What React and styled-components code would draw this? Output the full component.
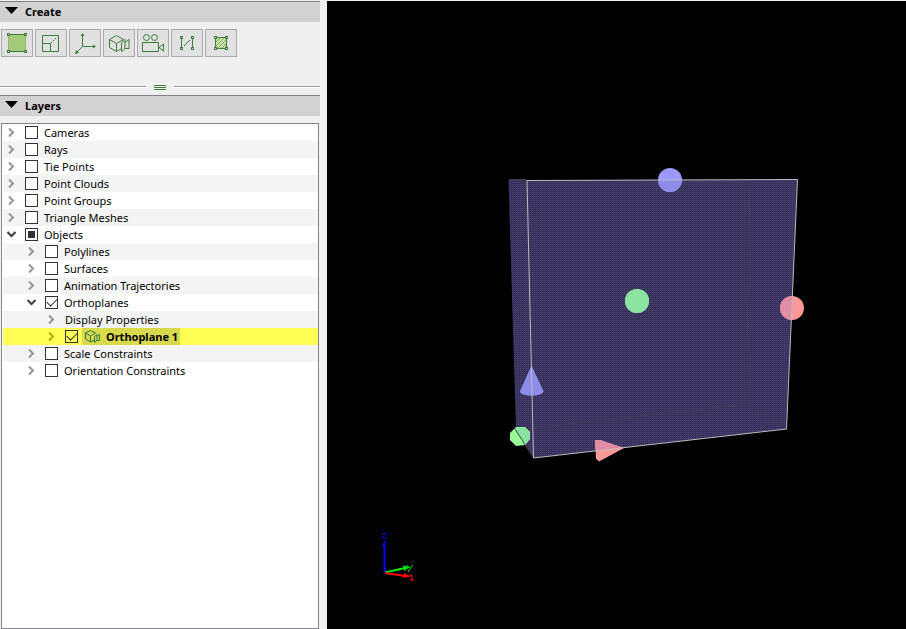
import React, { useState } from "react";
import styled, { createGlobalStyle, css } from "styled-components";

const GlobalStyle = createGlobalStyle`
  * { box-sizing: border-box; }
  html, body { margin: 0; height: 100%; }
  #root { height: 100%; }
  body {
    background: #f0f0f0;
    color: #000;
    font: 12px/17px "Noto Sans", "Open Sans", sans-serif;
  }
`;

const Window = styled.div`
  display: flex;
  gap: 7px;
  height: 100vh;
  padding-top: 1px;
  overflow: hidden;
`;

const Sidebar = styled.aside`
  display: flex;
  flex-direction: column;
  flex: 0 0 320px;
  min-height: 0;
`;

const PanelHeader = styled.button`
  display: flex;
  align-items: center;
  gap: 7px;
  flex: none;
  width: 100%;
  height: 21px;
  padding: 0 5px;
  border: 0;
  border-top: 1px solid #808080;
  background: #d2d2d2;
  color: #000;
  font: 700 11px/20px "Noto Sans", "Open Sans", sans-serif;
  text-align: left;
`;

const Triangle = styled.svg`
  width: 13px;
  height: 7px;
  margin-bottom: 4px;
`;

const Toolbar = styled.div`
  display: flex;
  flex: none;
  gap: 2px;
  padding: 7px 1px 28px;
`;

const ToolButton = styled.button`
  width: 32px;
  height: 28px;
  padding: 0;
  border: 1px solid #a7a9ac;
  background: #e1e1e1;
  color: #3c7d39;
  &:hover { background: #e9f2e5; }
`;

const ToolIcon = styled.svg`
  display: block;
  width: 30px;
  height: 26px;
  fill: none;
  stroke: currentColor;
`;

const Splitter = styled.div`
  display: flex;
  align-items: center;
  flex: none;
  gap: 8px;
  height: 5px;
  margin-bottom: 5px;
  cursor: row-resize;
`;

const Rule = styled.span`
  flex: 1;
  height: 3px;
  border-top: 1px solid #a0a0a0;
  background: linear-gradient(#fff, #fff) top / 100% 1px no-repeat;
`;

const Grip = styled.span`
  width: 12px;
  height: 5px;
  border: solid #3c7d39;
  border-width: 1px 0;
  background: linear-gradient(#3c7d39, #3c7d39) center / 100% 1px no-repeat;
`;

const Tree = styled.ul`
  flex: 1;
  min-height: 0;
  margin: 7px 1px 0;
  padding: 0;
  border: 1px solid #828790;
  background: #fff;
  list-style: none;
  overflow: hidden;
`;

const Row = styled.li`
  display: flex;
  align-items: center;
  height: 17px;
  margin-left: 1px;
  padding-left: ${(p) => 4 + p.$level * 20}px;
  color: ${(p) => (p.$selected ? "#b2ab00" : "#969696")};

  &:nth-child(even) { background: #f4f4f4; }
  ${(p) => p.$selected && css`&& { background: #ffff55; }`}
`;

const Expander = styled.button`
  width: 9px;
  height: 9px;
  margin-right: 9px;
  padding: 0;
  border: 0;
  background: none;
  color: ${(p) => (p.$open ? "#404040" : "inherit")};

  svg {
    display: block;
    fill: none;
    stroke: currentColor;
    stroke-width: 2;
  }
`;

const Check = styled.input`
  appearance: none;
  flex: none;
  width: 13px;
  height: 13px;
  margin: 0 4px 0 0;
  border: 1px solid #333;
  background: ${(p) => (p.$selected ? "transparent" : "#fff")};

  ${(p) => p.$partial && css`
    background: linear-gradient(#333, #333) center / 7px 7px no-repeat #fff;
  `}

  &:checked {
    display: grid;
    place-items: center;
  }
  &:checked::before {
    content: "";
    width: 9px;
    height: 5px;
    margin-bottom: 3px;
    border: solid #333;
    border-width: 0 0 1px 1px;
    transform: rotate(-45deg);
  }
`;

const Label = styled.label`
  display: flex;
  align-items: center;
  height: 17px;
  padding: 0 ${(p) => (p.$plain ? 0 : 2)}px;
  color: #000;
  font-size: 11px;
  font-weight: ${(p) => (p.$selected ? 700 : 400)};
  white-space: nowrap;
  ${(p) => p.$selected && css`background: #d9d94c;`}
`;

const PlaneIcon = styled.svg`
  width: 17px;
  height: 17px;
  margin-right: 5px;
  fill: none;
  stroke: #2f7a48;
`;

const Viewport = styled.main`
  flex: 1;
  min-width: 0;
  background: #000;
`;

const Scene = styled.svg`
  display: block;
  width: 100%;
  height: 100%;
`;

const Nodes = ({ xs, ys }) =>
  xs.flatMap((x) => ys.map((y) => (
    <rect key={`${x}-${y}`} x={x - 1} y={y - 1} width="2" height="2" fill="#e1e1e1" />
  )));

const tools = [
  {
    name: "Create region",
    art: (
      <>
        <path d="M6.5 4.5h17v17h-17z" fill="#a2ca79" stroke="#8eb96a" />
        <path d="M8 4.5h14M8 21.5h14" />
        <Nodes xs={[6.5, 23.5]} ys={[4.5, 21.5]} />
      </>
    ),
  },
  {
    name: "Create scale constraint",
    art: (
      <>
        <path d="M6.5 5.5h16v16h-16zM6.5 13.5h8v8" />
        <path d="M14.5 13.5l6-6" strokeDasharray="2 1" />
      </>
    ),
  },
  {
    name: "Create coordinate system",
    art: (
      <>
        <path d="M12.5 4v12.5H24M12.5 16.5l-6 6" />
        <path d="M12.5 3l2 3h-4zM26 16.5l-3 2v-4zM5 24l1-4 3 3z" fill="currentColor" stroke="none" />
      </>
    ),
  },
  {
    name: "Create orthoplane",
    art: (
      <path d="M12.5 5.5l7 4-7 4-7-4zM5.5 9.5v8l7 4v-8M12.5 21.5l5-3M17.5 13v8.500l3.500-3v-9zM21 12.500l4-3v9h-4" />
    ),
  },
  {
    name: "Create animation",
    art: (
      <>
        <circle cx="8.5" cy="7.5" r="3" />
        <circle cx="16.5" cy="7.5" r="3" />
        <path d="M4.5 12.5h16v9h-16zM21 17.5l4.500-3.500v7z" />
      </>
    ),
  },
  {
    name: "Create polyline",
    art: (
      <>
        <path d="M9.5 9v8M20.5 9v8M12 16l6-6" />
        <Nodes xs={[9.5, 20.5]} ys={[7.5, 18.5]} />
      </>
    ),
  },
  {
    name: "Create surface",
    art: (
      <>
        <path d="M9.5 7.5h11v11h-11z" fill="#c7dfab" />
        <path d="M10 12l4-4M10 16l8-8M12 18l8-8M16 18l4-4" stroke="#78a862" />
        <Nodes xs={[9.5, 20.5]} ys={[7.5, 18.5]} />
      </>
    ),
  },
];

const layers = [
  { name: "Cameras" },
  { name: "Rays" },
  { name: "Tie Points" },
  { name: "Point Clouds" },
  { name: "Point Groups" },
  { name: "Triangle Meshes" },
  { name: "Objects", open: true, partial: true },
  { name: "Polylines", level: 1 },
  { name: "Surfaces", level: 1 },
  { name: "Animation Trajectories", level: 1 },
  { name: "Orthoplanes", level: 1, open: true, checked: true },
  { name: "Display Properties", level: 2, plain: true },
  { name: "Orthoplane 1", level: 2, checked: true, selected: true },
  { name: "Scale Constraints", level: 1 },
  { name: "Orientation Constraints", level: 1 },
];

function Header({ children }) {
  return (
    <PanelHeader type="button" aria-expanded="true">
      <Triangle viewBox="0 0 13 7" aria-hidden="true"><path d="M0 0h13L6.5 7z" /></Triangle>
      {children}
    </PanelHeader>
  );
}

function LayerRow({ name, level = 0, open, partial, plain, selected, checked: initial = false }) {
  const [checked, setChecked] = useState(initial);
  const id = name.toLowerCase().replace(/ /g, "-");
  return (
    <Row $level={level} $selected={selected}>
      <Expander type="button" $open={open} aria-label={`Expand ${name}`} aria-expanded={!!open}>
        <svg width="9" height="9" viewBox="0 0 9 9">
          <path d={open ? "M0.5 2l4 4 4-4" : "M2 0.5l4 4-4 4"} />
        </svg>
      </Expander>
      {!plain && (
        <Check
          id={id}
          type="checkbox"
          checked={checked}
          onChange={(e) => setChecked(e.target.checked)}
          $partial={partial}
          $selected={selected}
        />
      )}
      <Label
        as={plain ? "span" : "label"}
        htmlFor={plain ? undefined : id}
        $plain={plain}
        $selected={selected}
      >
        {selected && (
          <PlaneIcon viewBox="0 0 17 17" aria-hidden="true">
            <path d="M6.5 2.5l5 2.5-5 3-5-3zM1.5 5v6l5 3V8M6.5 14l4-2M10.5 8.5v6l2.500-2v-6zM13 8l2.500-1.500v6H13" />
          </PlaneIcon>
        )}
        {name}
      </Label>
    </Row>
  );
}

const Handles = ({ red, green, blue }) => (
  <>
    <g fill={blue}>
      <circle cx="670" cy="180" r="12" />
      <path d="M531.5 366l12 25.5q-2 4-12 4t-11.5-4z" />
    </g>
    <g fill={green}>
      <circle cx="637" cy="301" r="12" />
      <path d="M516 427h9l5 5v7l-5 6-9 1-6-6v-7z" />
    </g>
    <g fill={red}>
      <circle cx="792" cy="308" r="12" />
      <path d="M595 440l5 0 24 8-25 13.5-3-3z" />
    </g>
  </>
);

function ModelScene() {
  return (
    <Scene viewBox="327 1 579 628" role="img" aria-label="3D view of Orthoplane 1">
      <defs>
        <pattern id="weave" width="2" height="2" patternUnits="userSpaceOnUse">
          <rect width="2" height="2" fill="#382f5a" />
          <rect width="1" height="1" fill="#4a4675" />
        </pattern>
        <clipPath id="volume">
          <path d="M508.5 180H797.5L786.5 429 533.5 458 516 430z" />
        </clipPath>
      </defs>
      <path d="M508.5 180H797.5L786.5 429 533.5 458 516 430z" fill="url(#weave)" />
      <path d="M516 430L746 404 750 181M746 404l40 25" fill="none" stroke="#454058" strokeOpacity="0.7" />
      <path d="M509 179.5h18" stroke="#3b3a40" />
      <Handles red="#ff9999" green="#99ff99" blue="#9999ff" />
      <g clipPath="url(#volume)">
        <Handles red="#e08da5" green="#8be3a0" blue="#8d8ce8" />
      </g>
      <path d="M514 427.5L533.5 458" stroke="#404040" />
      <path d="M527 180.5L797.5 179.5 786.5 429 533.5 458z" fill="none" stroke="#bcbcbc" />
      <g fill="none">
        <path d="M384.5 573V543" stroke="#00f" strokeWidth="2" />
        <path d="M384.5 540l2 6h-4z" fill="#00f" />
        <path d="M382 533.5h4l-4 4.5h5" stroke="#00d" />
        <path d="M385 572.5l20-4.5" stroke="#00e800" strokeWidth="2" />
        <path d="M403 565.500l7 1.500-6 4z" fill="#00e800" />
        <path d="M407 565l2.500 3M412.500 565l-4.500 7" stroke="#00e800" />
        <path d="M385 573l20 3" stroke="#f00" strokeWidth="2" />
        <path d="M404 573l7 3.500-8 1.500z" fill="#f00" />
        <path d="M410 575.500h2v5M410 580h4" stroke="#f00" />
      </g>
    </Scene>
  );
}

export default function App() {
  return (
    <>
      <GlobalStyle />
      <Window>
        <Sidebar>
          <Header>Create</Header>
          <Toolbar role="toolbar" aria-label="Create">
            {tools.map((tool) => (
              <ToolButton key={tool.name} type="button" aria-label={tool.name}>
                <ToolIcon viewBox="0 0 30 26" aria-hidden="true">{tool.art}</ToolIcon>
              </ToolButton>
            ))}
          </Toolbar>
          <Splitter role="separator"><Rule /><Grip /><Rule /></Splitter>
          <Header>Layers</Header>
          <Tree>
            {layers.map((layer) => <LayerRow key={layer.name} {...layer} />)}
          </Tree>
        </Sidebar>
        <Viewport><ModelScene /></Viewport>
      </Window>
    </>
  );
}
